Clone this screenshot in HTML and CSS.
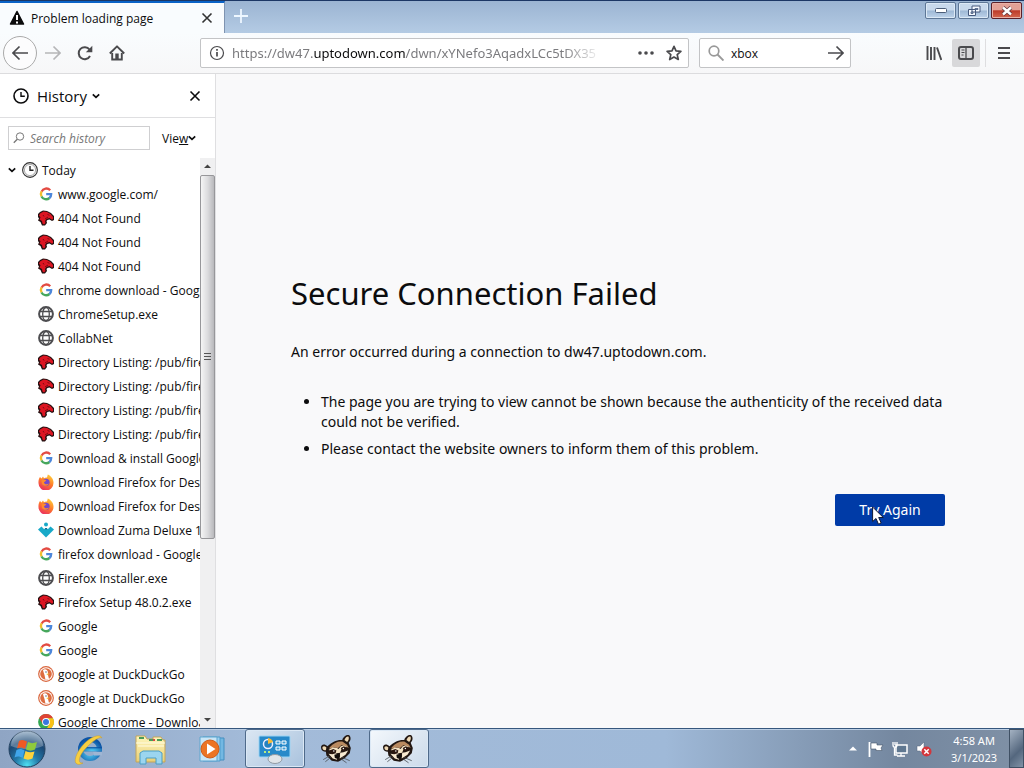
FILE: index.html
```html
<!DOCTYPE html>
<html lang="en">
<head>
<meta charset="utf-8">
<title>Problem loading page</title>
<link rel="stylesheet" href="styles.css">
</head>
<body>
<svg class="defs" aria-hidden="true">
  <defs>
    <linearGradient id="fx" x1=".8" y1="0" x2=".3" y2="1"><stop offset="0" stop-color="#ffd43a"/><stop offset=".5" stop-color="#ff7a2a"/><stop offset="1" stop-color="#e92c62"/></linearGradient>
    <radialGradient id="orb" cx=".5" cy=".95" r=".95"><stop offset="0" stop-color="#4fe0f2"/><stop offset=".35" stop-color="#2379a8"/><stop offset=".7" stop-color="#1b4773"/><stop offset="1" stop-color="#8eaac4"/></radialGradient>
    <linearGradient id="folder" x1="0" y1="0" x2="0" y2="1"><stop offset="0" stop-color="#fff6bd"/><stop offset="1" stop-color="#e9cf75"/></linearGradient>
    <radialGradient id="ie" cx=".5" cy=".7" r=".7"><stop offset="0" stop-color="#54d0f5"/><stop offset="1" stop-color="#0c54a5"/></radialGradient>
  </defs>
  <symbol id="i-google" viewBox="0 0 16 16"><g fill="none" stroke-width="2.3"><path d="M12.2 4.2A5.2 5.2 0 0 0 3.6 5.6" stroke="#e34b42"/><path d="M3.6 5.4a5.2 5.2 0 0 0 0 5.1" stroke="#f2bd2c"/><path d="M3.5 10.4a5.2 5.2 0 0 0 8 1.6" stroke="#46a75c"/><path d="M8.2 8.1h5a5.2 5.2 0 0 1-1.8 4" stroke="#4d87da"/></g></symbol>
  <symbol id="i-dino" viewBox="0 0 16 16"><path d="M0 4 2 2 5 .5 9 1l4 2 3 3v4l-2 1-2.500-1.500L9.500 10 8.500 11 9 13l-2 2.500H4L2.500 12 0 10.500l1-2-1-1.500z" fill="#231011"/><path d="M2 3.500 5.500 1.500 9 2l3.500 2 2.500 3v2l-1 .8L11.500 8 8.500 9 7 11 7.500 13 6 14.500 4.500 13.500 4 11 1.500 9.500 2.500 7.500 1 5.500z" fill="#dc1522"/><path d="M9.500 4.500l2 .8M5 5l1 1.500M10 7l-3 2" stroke="#7c0911" fill="none"/></symbol>
  <symbol id="i-globe" viewBox="0 0 16 16"><g fill="none" stroke="#4d4d50"><circle cx="8" cy="8" r="6.900" stroke-width="2"/><ellipse cx="8" cy="8" rx="3.300" ry="6.500" stroke-width="1.300"/><path d="M2 5.500h12M2 10.500h12" stroke-width="1.300"/></g></symbol>
  <symbol id="i-firefox" viewBox="0 0 16 16"><path d="M2 3l1.500 1.500L5 2.500l1 1.800C7 3.500 8 3.300 9 3.500L9.800.5C13 2 15.700 5 15.500 9a7.500 7.500 0 0 1-15 .2C.3 6.500 1 4.500 2 3z" fill="url(#fx)"/><circle cx="8" cy="8.300" r="3.600" fill="#7447cc"/><path d="M3.500 6.500C5 5 7 5.500 8.500 6.300 7 7 7.500 8 6 8.200 6 10 8.500 11 11 9.500 9.500 12.500 5.500 12.500 4 10z" fill="#ff8a2c"/></symbol>
  <symbol id="i-zuma" viewBox="0 0 16 16"><path d="M0 7.500 3.500 4.500 6 7h4l2.500-2.500L16 7.500 8 15.500z" fill="#18a9c8"/><circle cx="8" cy="2.500" r="2" fill="#18a9c8"/><path d="M6.500 6h3L8 8z" fill="#0d6e93"/></symbol>
  <symbol id="i-duck" viewBox="0 0 16 16"><circle cx="8" cy="8" r="7.900" fill="#d9653c"/><circle cx="8" cy="8" r="6.700" fill="#fff"/><circle cx="8" cy="8" r="5.800" fill="#dd6c40"/><path d="M5 4c2-1.500 5-.5 5 3v2l1 4-3.500.8L6.500 9 5.500 6z" fill="#fff"/><path d="M8.500 7.800 12 7.500 9 9.200z" fill="#f5c23b"/><circle cx="8" cy="6" r=".7" fill="#38506c"/></symbol>
  <symbol id="i-chrome" viewBox="0 0 16 16"><circle cx="8" cy="8" r="7.900" fill="#33a852"/><path d="M1.200 4A7.900 7.900 0 0 1 15 4.200H8L4.700 10z" fill="#df4335"/><path d="M15 4.200A7.900 7.900 0 0 1 8 15.900L11.400 10 8 4.200z" fill="#fbc116"/><circle cx="8" cy="8" r="3.900" fill="#fff"/><circle cx="8" cy="8" r="3" fill="#3876df"/></symbol>
  <symbol id="i-clock" viewBox="0 0 16 16"><circle cx="8" cy="8" r="7" fill="none" stroke="currentColor" stroke-width="1.600"/><path d="M8 4v4.300h3.800" fill="none" stroke="currentColor" stroke-width="1.400"/></symbol>
  <symbol id="i-treeclock" viewBox="0 0 16 16"><circle cx="8" cy="8" r="7.400" fill="#eee" stroke="#333" stroke-width="1.100"/><circle cx="8" cy="8" r="5.600" fill="#fff" stroke="#999" stroke-width=".8"/><path d="M8 4v4.300h3.500" fill="none" stroke="#222" stroke-width="1.400"/></symbol>
  <symbol id="i-chev" viewBox="0 0 8 8"><path d="M.8 2.300 4 5.400 7.200 2.300" fill="none" stroke="currentColor" stroke-width="1.700"/></symbol>
  <symbol id="i-x" viewBox="0 0 12 12"><path d="M1.500 1.500l9 9M10.500 1.500l-9 9" fill="none" stroke="currentColor" stroke-width="1.600"/></symbol>
  <symbol id="i-search" viewBox="0 0 16 16"><circle cx="6" cy="6" r="4.800" fill="none" stroke="currentColor" stroke-width="1.700"/><path d="M9.500 9.500l6 6" stroke="currentColor" stroke-width="1.900"/></symbol>
  <symbol id="i-find" viewBox="0 0 12 12"><circle cx="7" cy="4.500" r="3.700" fill="none" stroke="currentColor"/><path d="M4.300 7.200.8 10.700" stroke="currentColor" stroke-width="1.300"/></symbol>
  <symbol id="i-arrow" viewBox="0 0 16 16"><path d="M0 8h15M8.500 1.500 15 8l-6.500 6.500" fill="none" stroke="currentColor" stroke-width="1.700"/></symbol>
  <symbol id="i-raccoon" viewBox="0 0 32 28">
    <path d="M7 11.500C4 8.500.5 10 1 13c.3 2.500 2 3.500 4.500 3.500L6 20l5 5 6 1 6-3 5-5 1-5-2-5c2-2 2.500-5 .5-7-3-1-6 2-6.500 4.500-5-.5-10 2-14 6z" fill="#221712"/>
    <path d="M6 12.500c-2-2-4-1-3.700.7.3 1.500 1.700 2 3.200 2zM23 5.500c1-2.500 2.500-3.500 3.700-3.200 1 1.700.3 3.500-1.200 5.200z" fill="#efd9b4"/>
    <path d="M9 12.500C13 8 17 6.500 21 7l4.500 3 1.500 3-3-1.500-4-1-3 2.500-4-.5-4 1.500z" fill="#b98a60"/>
    <path d="M8 15l4-2.500 4 .5 1.500 1 2-2.500 3-.8 3 1.300-2.500.8-3 2-1 2.700-3.500.5-2.500-2z" fill="#f4e3c4"/>
    <path d="M9 15.500l3.500-1.500 3 1.500-1 2.500-4 1zM19.500 13l3-1.500 3 1.500-.5 2.500-4 .5z" fill="#2a1710"/>
    <path d="M8 18.500l3.500.5 3.500-1 1.500 1.500-.5 4.500-4-1zM19 17.500l3-.5 4.500-1.500-2.500 4-5.500 3.500z" fill="#f8ead1"/>
    <path d="M13.500 19.500l3.500-1 2 2-2.500 3-2.500-1z" fill="#120d0b"/>
    <path d="M9 20.500l-6 3.500M10 22l-5 4M21 22l7 3M20 23.500l5 3.500" stroke="#50565c" stroke-width=".8"/>
    <circle cx="13" cy="15.800" r=".7" fill="#fff"/><circle cx="22" cy="13.500" r=".7" fill="#fff"/>
  </symbol>
</svg>

<header class="titlebar">
  <div class="tab">
    <svg class="s16" viewBox="0 0 16 16"><path d="M8 1.500 14.500 14h-13z" fill="#0c0c0d" stroke="#0c0c0d" stroke-width="1.500" stroke-linejoin="round"/><path d="M8 5v5M8 11.500v2" stroke="#fff" stroke-width="2"/></svg>
    <span class="tab-title">Problem loading page</span>
    <button class="plain" aria-label="Close tab"><svg class="s12"><use href="#i-x"/></svg></button>
  </div>
  <button class="plain newtab" aria-label="New tab"><svg class="s16" viewBox="0 0 16 16"><path d="M8 1v14M1 8h14" stroke="#eef7ff" stroke-width="1.800"/></svg></button>
  <div class="winbtns">
    <button class="win" aria-label="Minimize"><svg width="12" height="6" viewBox="0 0 12 6"><rect x=".5" y=".5" width="11" height="4" rx="1" fill="#fff" stroke="#4b5d78"/></svg></button>
    <button class="win" aria-label="Restore"><svg width="14" height="12" viewBox="0 0 14 12"><path d="M5 1h8v6H5zM1.500 4.500h7v6h-7z" fill="#f5f9ff" stroke="#46597c"/><path d="M8 3.500h3v1H8zM4 7h2v1.500H4z" fill="#9db7d6" stroke="#46597c" stroke-width=".8"/></svg></button>
    <button class="win close" aria-label="Close"><svg width="12" height="10" viewBox="0 0 12 10"><path d="M2 1.500l8 7M10 1.500l-8 7" stroke="#62373d" stroke-width="4"/><path d="M2 1.500l8 7M10 1.500l-8 7" stroke="#fff" stroke-width="2.400"/></svg></button>
  </div>
</header>

<nav class="toolbar">
  <div class="navbtns">
    <button class="plain back" aria-label="Back"><svg class="s16 flip"><use href="#i-arrow"/></svg></button>
    <button class="plain disabled" aria-label="Forward"><svg class="s16"><use href="#i-arrow"/></svg></button>
    <button class="plain" aria-label="Reload"><svg class="s16" viewBox="0 0 16 16"><path d="M13 11A6 6 0 1 1 12.500 4.500" fill="none" stroke="currentColor" stroke-width="2"/><path d="M15.300.7v6.500H8.800z" fill="currentColor"/></svg></button>
    <button class="plain" aria-label="Home"><svg class="s16" viewBox="0 0 16 16"><path d="M.8 8.500 8 1.300l7.200 7.200" fill="none" stroke="currentColor" stroke-width="1.900" stroke-linejoin="round"/><path d="M3.200 8v6.500h9.600V8" fill="none" stroke="currentColor" stroke-width="1.900"/><path d="M6.300 8.500h3.400V14H6.300z" fill="currentColor"/></svg></button>
  </div>
  <div class="field url">
    <svg class="s16" viewBox="0 0 16 16"><circle cx="8" cy="8" r="6.500" fill="none" stroke="currentColor" stroke-width="1.200"/><path d="M8 7v4.500M8 4v1.700" stroke="currentColor" stroke-width="1.700"/></svg>
    <div class="address" role="textbox" aria-label="Address" contenteditable="true" spellcheck="false">https://dw47.<b>uptodown.com</b>/dwn/xYNefo3AqadxLCc5tDX35</div>
    <button class="plain" aria-label="Page actions"><svg class="s16" viewBox="0 0 16 16"><g fill="currentColor"><circle cx="2" cy="8" r="1.800"/><circle cx="8" cy="8" r="1.800"/><circle cx="14" cy="8" r="1.800"/></g></svg></button>
    <button class="plain" aria-label="Bookmark this page"><svg class="s16" viewBox="0 0 16 16"><path d="M8 1.300l2 4.500 4.900.5-3.700 3.300 1.100 4.900L8 12l-4.300 2.500 1.100-4.900L1.100 6.300 6 5.800z" fill="none" stroke="currentColor" stroke-width="1.700" stroke-linejoin="round"/></svg></button>
  </div>
  <div class="field websearch">
    <svg class="s16 muted"><use href="#i-search"/></svg>
    <input type="text" value="xbox" aria-label="Search the web">
    <button class="plain" aria-label="Go"><svg class="s16"><use href="#i-arrow"/></svg></button>
  </div>
  <div class="tools">
    <button class="plain" aria-label="Library"><svg class="s16" viewBox="0 0 16 16"><path d="M1.500 1v14M5 2v13M8.500 2v13M11 2.500 15.300 15" fill="none" stroke="currentColor" stroke-width="1.900"/></svg></button>
    <button class="plain pressed" aria-label="Sidebars"><svg class="s16" viewBox="0 0 16 16"><rect x="1" y="2" width="14" height="12" rx="2" fill="none" stroke="currentColor" stroke-width="2"/><path d="M8 2v12" stroke="currentColor" stroke-width="1.300"/><path d="M3.500 5h3M3.500 7.500h3M3.500 10h2" stroke="currentColor"/></svg></button>
    <button class="plain menu" aria-label="Menu"><svg class="s16" viewBox="0 0 16 16"><path d="M2 3h12M2 8h12M2 13h12" stroke="currentColor" stroke-width="1.900"/></svg></button>
  </div>
</nav>

<div class="workspace">
  <aside class="sidebar">
    <div class="side-head">
      <button class="plain side-title"><svg class="s16"><use href="#i-clock"/></svg><span>History</span><svg class="s8"><use href="#i-chev"/></svg></button>
      <button class="plain" aria-label="Close sidebar"><svg class="s12"><use href="#i-x"/></svg></button>
    </div>
    <div class="side-search">
      <label class="filter"><svg class="s12"><use href="#i-find"/></svg><input type="text" placeholder="Search history" aria-label="Search history"></label>
      <button class="plain view">Vie<u>w</u><svg class="s8"><use href="#i-chev"/></svg></button>
    </div>
    <div class="side-body">
      <div class="tree">
        <button class="plain today"><svg class="s8"><use href="#i-chev"/></svg><svg class="s16"><use href="#i-treeclock"/></svg>Today</button>
        <ul class="items">
          <li><a href="#"><svg class="s16"><use href="#i-google"/></svg>www.google.com/</a></li>
          <li><a href="#"><svg class="s16"><use href="#i-dino"/></svg>404 Not Found</a></li>
          <li><a href="#"><svg class="s16"><use href="#i-dino"/></svg>404 Not Found</a></li>
          <li><a href="#"><svg class="s16"><use href="#i-dino"/></svg>404 Not Found</a></li>
          <li><a href="#"><svg class="s16"><use href="#i-google"/></svg>chrome download - Google</a></li>
          <li><a href="#"><svg class="s16"><use href="#i-globe"/></svg>ChromeSetup.exe</a></li>
          <li><a href="#"><svg class="s16"><use href="#i-globe"/></svg>CollabNet</a></li>
          <li><a href="#"><svg class="s16"><use href="#i-dino"/></svg>Directory Listing: /pub/firefox</a></li>
          <li><a href="#"><svg class="s16"><use href="#i-dino"/></svg>Directory Listing: /pub/firefox</a></li>
          <li><a href="#"><svg class="s16"><use href="#i-dino"/></svg>Directory Listing: /pub/firefox</a></li>
          <li><a href="#"><svg class="s16"><use href="#i-dino"/></svg>Directory Listing: /pub/firefox</a></li>
          <li><a href="#"><svg class="s16"><use href="#i-google"/></svg>Download &amp; install Google</a></li>
          <li><a href="#"><svg class="s16"><use href="#i-firefox"/></svg>Download Firefox for Desktop</a></li>
          <li><a href="#"><svg class="s16"><use href="#i-firefox"/></svg>Download Firefox for Desktop</a></li>
          <li><a href="#"><svg class="s16"><use href="#i-zuma"/></svg>Download Zuma Deluxe 1.0</a></li>
          <li><a href="#"><svg class="s16"><use href="#i-google"/></svg>firefox download - Google</a></li>
          <li><a href="#"><svg class="s16"><use href="#i-globe"/></svg>Firefox Installer.exe</a></li>
          <li><a href="#"><svg class="s16"><use href="#i-dino"/></svg>Firefox Setup 48.0.2.exe</a></li>
          <li><a href="#"><svg class="s16"><use href="#i-google"/></svg>Google</a></li>
          <li><a href="#"><svg class="s16"><use href="#i-google"/></svg>Google</a></li>
          <li><a href="#"><svg class="s16"><use href="#i-duck"/></svg>google at DuckDuckGo</a></li>
          <li><a href="#"><svg class="s16"><use href="#i-duck"/></svg>google at DuckDuckGo</a></li>
          <li><a href="#"><svg class="s16"><use href="#i-chrome"/></svg>Google Chrome - Download</a></li>
        </ul>
      </div>
      <div class="scrollbar" aria-hidden="true">
        <svg class="cap" viewBox="0 0 15 17"><path d="M4 10l3.500-3.500L11 10z" fill="#444"/></svg>
        <div class="track"><div class="thumb"><svg width="7" height="8" viewBox="0 0 7 8"><path d="M0 .5h7M0 3.500h7M0 6.500h7" stroke="#555"/></svg></div></div>
        <svg class="cap" viewBox="0 0 15 17"><path d="M4 7l3.500 3.500L11 7z" fill="#444"/></svg>
      </div>
    </div>
  </aside>

  <main class="page">
    <section class="error">
      <h1>Secure Connection Failed</h1>
      <p>An error occurred during a connection to dw47.uptodown.com.</p>
      <ul class="reasons">
        <li>The page you are trying to view cannot be shown because the authenticity of the received data could not be verified.</li>
        <li>Please contact the website owners to inform them of this problem.</li>
      </ul>
      <div class="actions">
        <button class="retry">Try Again</button>
        <svg class="pointer" viewBox="0 0 12 19"><path d="M.6 1v14.500l3.400-3 2.500 5.700 2.700-1.200-2.500-5.500h4.600z" fill="#fff" stroke="#111a33"/></svg>
      </div>
    </section>
  </main>
</div>

<footer class="taskbar">
  <button class="plain start" aria-label="Start"><svg width="38" height="38" viewBox="0 0 38 38"><circle cx="19" cy="19" r="18" fill="url(#orb)" stroke="#23415f"/><path d="M3 16a16 16 0 0 1 32 0c-8 4-24 4-32 0z" fill="#fff" opacity=".28"/><path d="M11 11c3-2 5-1 8 .5L17 19c-3-2-5-2-8-.5z" fill="#ee5a24"/><path d="M20 12c3 1.500 5 1.500 9 0l-2 7.500c-3 1.500-6 1.500-9 0z" fill="#8fca3c"/><path d="M8.500 20c3-1.500 5-1.500 8 .5l-2 7.500c-3-2-5-2-8-.5z" fill="#40a5ea"/><path d="M17.500 21c3 1.500 6 1.500 9 .5l-2 7c-3 1.500-6 1.500-9 0z" fill="#fdd23c"/></svg></button>
  <button class="task" aria-label="Internet Explorer"><svg width="32" height="32" viewBox="0 0 32 32"><circle cx="17" cy="16" r="9.500" fill="none" stroke="url(#ie)" stroke-width="5"/><path d="M20 18.500h9v4h-8z" fill="#a0b6d3"/><path d="M9 14h20v4.500H9z" fill="url(#ie)"/><path d="M29 5C27 0 17 4 10 12 3 20 0 29 4 31c2 1 4 0 6-1-7 1-3-9 3-15S26 3 29 5z" fill="#f7cf42" stroke="#c99b2a" stroke-width=".5"/></svg></button>
  <button class="task" aria-label="Windows Explorer"><svg width="34" height="32" viewBox="0 0 34 32"><path d="M2 5V3h9l2 3h6V4h8l2 3h2v22H2z" fill="url(#folder)" stroke="#c3a55b"/><path d="M5 5h5M15 7h4M23 7h5" stroke="#4a9b58" stroke-width="2"/><path d="M19 7h2" stroke="#d44" stroke-width="2"/><path d="M2 10h29M4 13h26" stroke="#fffce2"/><path d="M6 31V20l3-2h16l3 2v11h-6v-6H12v6z" fill="#9bd5ef" stroke="#4b9dc4"/></svg></button>
  <button class="task" aria-label="Windows Media Player"><svg width="30" height="28" viewBox="0 0 30 28"><path d="M9 3h17v22H9z" fill="#73b8e2" stroke="#458fc0"/><path d="M5 2h17v24H5z" fill="#9ccfee" stroke="#4e9ccb"/><path d="M2 2h17v24H2z" fill="#c9e6f7" stroke="#5fa6cf"/><circle cx="12" cy="14" r="9" fill="#ec7424" stroke="#cf5b18"/><path d="M9 8.500v11l8.500-5.500z" fill="#fff"/></svg></button>
  <button class="task open" aria-label="Control Panel"><svg width="34" height="30" viewBox="0 0 34 30"><rect x="1" y="2" width="31" height="21" rx="1" fill="#2789c9" stroke="#9bd4f4"/><circle cx="10" cy="10" r="4.500" fill="#2582c0" stroke="#eef" stroke-width="1.500"/><path d="M10 10V4a6 6 0 0 1 5 4z" fill="#f6bb3a"/><path d="M18 7h4v3h-4zM24 7h4v3h-4zM18 13h4v3h-4zM24 13h4v3h-4z" fill="#419fd7" stroke="#fff"/><path d="M6 18h2M10 18h2" stroke="#b9ec82" stroke-width="2"/><ellipse cx="17" cy="25" rx="7" ry="4.500" fill="#e1e5e9" stroke="#9099a3"/></svg></button>
  <button class="task" aria-label="Raccoon"><svg width="34" height="30"><use href="#i-raccoon"/></svg></button>
  <button class="task open active" aria-label="Raccoon window"><svg width="34" height="30"><use href="#i-raccoon"/></svg></button>
  <div class="tray">
    <svg width="8" height="5" viewBox="0 0 8 5"><path d="M0 4.500 4 .5l4 4z" fill="#fff"/></svg>
    <svg class="s16" viewBox="0 0 16 16"><path d="M1.500 1v15" stroke="#fff" stroke-width="1.800"/><path d="M3 2h6v2h6l-2 3 1 2.500H8V8H3z" fill="#fff" stroke="#445468" stroke-width=".6"/></svg>
    <svg class="s16" viewBox="0 0 16 16"><path d="M4 4h11v8H4z" fill="#5f7790" stroke="#fff" stroke-width="1.500"/><path d="M9 12v3M5 15h8M2.500 7v7h3M1 1v3c0 3 4 3 4 0V1M3 1v3" fill="none" stroke="#fff" stroke-width="1.300"/></svg>
    <svg class="s16" viewBox="0 0 16 16"><path d="M1 5h3l4-4v13l-4-4H1z" fill="#fff" stroke="#55677c" stroke-width=".5"/><circle cx="10.500" cy="10.500" r="5" fill="#d4363b"/><path d="M8.300 8.300l4.400 4.400M12.700 8.300l-4.400 4.400" stroke="#fff" stroke-width="1.500"/></svg>
    <div class="clock"><span>4:58 AM</span><span>3/1/2023</span></div>
  </div>
  <button class="desktop" aria-label="Show desktop"></button>
</footer>
</body>
</html>
```
FILE: styles.css
```css
* { box-sizing: border-box; }
body {
  margin: 0;
  height: 100vh;
  display: grid;
  grid-template-rows: 33px 41px minmax(0, 1fr) 40px;
  overflow: hidden;
  font-family: "Open Sans", "Noto Sans", sans-serif;
  font-size: 12px;
  color: #0c0c0d;
  background: #f9f9fa;
}
button, input { font: inherit; color: inherit; }
ul { margin: 0; padding: 0; }
svg { display: block; flex: none; }
.defs { position: absolute; width: 0; height: 0; }
.s8 { width: 8px; height: 8px; }
.s12 { width: 12px; height: 12px; }
.s16 { width: 16px; height: 16px; }
.flip { transform: scaleX(-1); }
.muted { color: #999; }
.plain {
  display: flex;
  align-items: center;
  justify-content: center;
  padding: 0;
  border: 0;
  background: none;
}

.titlebar {
  display: flex;
  align-items: stretch;
  border-top: 1px solid #1c3765;
  background: linear-gradient(#9bb4d2, #b4cbe4);
}
.tab {
  display: flex;
  align-items: center;
  gap: 6px;
  width: 225px;
  padding: 0 11px 0 9px;
  border-top: 2px solid #0a63c7;
  border-right: 1px solid #7e93b0;
  background: #f9fcfe;
}
.tab-title { flex: 1; white-space: nowrap; }
.tab .plain { color: #333; }
.newtab { width: 32px; height: 30px; flex: none; }
.winbtns { display: flex; flex: none; gap: 2px; margin-left: auto; padding: 1px 2px 0 0; }
.win {
  display: grid;
  place-items: center;
  width: 31px;
  height: 17px;
  padding: 0;
  border: 1px solid #5e7796;
  border-radius: 2px;
  background: linear-gradient(#c8d9ec 48%, #9eb8d5 52%, #bed3ea);
  box-shadow: inset 0 0 0 1px #dce9f6;
}
.win.close {
  border-color: #5b2029;
  background: linear-gradient(#e3a196 45%, #bd3b2a 52%, #d4674f);
  box-shadow: inset 0 0 0 1px #e9b1a6;
}

.toolbar {
  display: flex;
  align-items: center;
  padding: 0 3px;
  border-bottom: 1px solid #dcdcde;
  background: linear-gradient(#f9fcfe, #f7f7f8);
  color: #4a4a4d;
}
.navbtns { display: flex; align-items: center; width: 197px; flex: none; }
.navbtns .plain { width: 32px; height: 32px; }
.navbtns .back {
  width: 34px;
  height: 34px;
  border: 1px solid #aaa;
  border-radius: 50%;
  background: #fcfcfd;
}
.navbtns .disabled { color: #b5b6b8; }
.field {
  display: flex;
  align-items: center;
  height: 30px;
  border: 1px solid #c3c4c6;
  border-radius: 2px;
  background: #fff;
}
.url { flex: 1; min-width: 0; gap: 12px; padding: 0 6px 0 8px; }
.address {
  flex: 1;
  min-width: 0;
  margin: 0 24px 0 -5px;
  overflow: hidden;
  white-space: nowrap;
  font-family: "Noto Sans", sans-serif;
  font-size: 13px;
  color: #7b7b7e;
  mask-image: linear-gradient(to left, transparent, #000 40px);
}
.address b { font-weight: 400; color: #0c0c0d; }
.websearch { width: 152px; flex: none; gap: 7px; margin-left: 10px; padding: 0 6px 0 8px; }
.websearch input { flex: 1; min-width: 0; padding: 0; border: 0; outline: 0; color: #0c0c0d; }
.tools { display: flex; align-items: center; justify-content: flex-end; width: 170px; flex: none; }
.tools .plain { width: 32px; height: 28px; }
.tools .plain.pressed { width: 28px; margin-left: 2px; border-radius: 2px; background: #d8d8da; }
.tools .plain.menu { width: 36px; margin-left: 5px; border-left: 1px solid #dedee0; }

.workspace { display: flex; min-height: 0; }
.sidebar {
  display: flex;
  flex-direction: column;
  width: 216px;
  flex: none;
  border-right: 1px solid #dfdfe1;
  background: #fff;
}
.side-head {
  display: flex;
  align-items: center;
  justify-content: space-between;
  height: 44px;
  flex: none;
  padding: 0 14px 0 13px;
  border-bottom: 1px solid #dfdfe1;
}
.side-title { gap: 8px; font-size: 15px; }
.side-title span { margin-right: -3px; }
.side-search { display: flex; align-items: center; gap: 12px; height: 40px; flex: none; padding: 0 8px; }
.filter {
  display: flex;
  align-items: center;
  gap: 5px;
  width: 142px;
  height: 24px;
  padding: 0 4px;
  border: 1px solid #cfcfd1;
  color: #777;
}
.filter input { flex: 1; min-width: 0; padding: 0; border: 0; outline: 0; background: none; }
.filter input::placeholder { font-style: italic; color: #777; opacity: 1; }
.side-body { display: flex; flex: 1; min-height: 0; }
.tree { flex: 1; min-width: 0; overflow: hidden; }
.today { height: 24px; padding-left: 8px; gap: 4px; }
.today .s8 { margin-right: 2px; }
.items { list-style: none; }
.items a {
  display: flex;
  align-items: center;
  gap: 4px;
  height: 24px;
  padding-left: 38px;
  white-space: nowrap;
  color: inherit;
  text-decoration: none;
}
.scrollbar { display: flex; flex-direction: column; width: 15px; flex: none; background: #f0f0f1; }
.cap { width: 15px; height: 17px; }
.track { flex: 1; min-height: 0; }
.thumb {
  display: grid;
  place-items: center;
  height: 68%;
  border: 1px solid #97979a;
  border-radius: 2px;
  background: linear-gradient(to right, #f5f5f5, #dcdcde 50%, #b9b9bc);
}

.page { display: flex; flex: 1; align-items: center; min-width: 0; padding: 0 75px 2px; background: #f9f9fa; }
.error { width: 100%; max-width: 658px; font-family: "Noto Sans", sans-serif; font-size: 14px; line-height: 20px; }
h1 { margin: 0 0 31px; font-size: 31px; font-weight: 400; line-height: 36px; }
p { margin: 0 0 30px; }
.reasons { padding-left: 30px; }
.reasons li { margin-bottom: 7px; }
.actions { position: relative; display: flex; justify-content: flex-end; margin-top: 35px; padding-right: 4px; }
.retry {
  width: 110px;
  height: 32px;
  padding: 0;
  border: 0;
  border-radius: 2px;
  background: #003ba7;
  color: #fff;
  font-size: 14px;
}
.pointer { position: absolute; right: 65px; top: 12px; width: 12px; height: 19px; }

.taskbar {
  display: flex;
  align-items: stretch;
  border-top: 1px solid #36577d;
  background: linear-gradient(to right, #8fa5c4, #a3bbd9 25%, #9fb9d8 65%, #74879f 88%, #8091a6);
  box-shadow: inset 0 1px #bdd0e5;
}
.start { width: 54px; }
.task {
  display: grid;
  place-items: center;
  width: 60px;
  margin: 0 0 0 2px;
  padding: 0;
  border: 1px solid transparent;
  border-radius: 3px;
  background: none;
}
.start + .task { margin-left: 5px; }
.task.open { border-color: #4f6a8a; background: linear-gradient(135deg, #dbe7f3, #a9c2dd); box-shadow: inset 0 0 0 1px #dbe8f5; }
.task.active { background: linear-gradient(135deg, #f4f8fc, #cbdaea); }
.tray { display: flex; align-items: center; gap: 8px; margin-left: auto; padding-right: 12px; color: #fff; }
.tray > svg:first-child { margin-right: 3px; }
.clock { display: flex; flex-direction: column; align-items: center; margin-left: 11px; line-height: 17px; font-family: "Noto Sans", sans-serif; font-size: 11px; }
.desktop { width: 15px; padding: 0; border: 1px solid #3f5064; background: linear-gradient(135deg, #a4b2c2, #54677e 60%, #8192a6); }
```
